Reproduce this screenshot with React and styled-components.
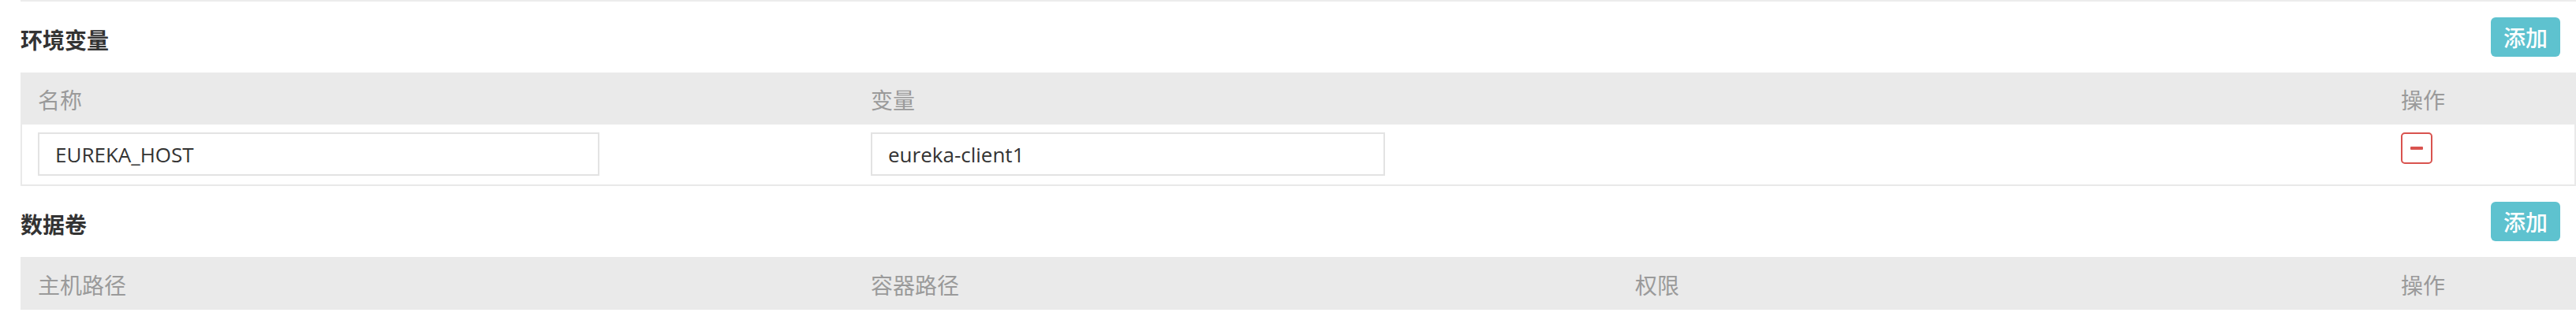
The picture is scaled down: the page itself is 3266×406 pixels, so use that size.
import React from "react";
import styled, { createGlobalStyle } from "styled-components";

const GlobalStyle = createGlobalStyle`
  html, body {
    margin: 0;
    padding: 0;
    background: #ffffff;
  }
  body {
    font-family: "Noto Sans CJK SC", "Open Sans", sans-serif;
  }
  * { box-sizing: border-box; }
`;

const Page = styled.div`
  padding-left: 26px;
  width: 3266px;
`;

const Divider = styled.div`
  height: 2px;
  background: #ececec;
`;

const Section = styled.section`
  display: flex;
  flex-direction: column;
`;

const SectionHead = styled.div`
  display: flex;
  justify-content: space-between;
  align-items: flex-start;
  padding: 20px 20px 20px 0;
`;

const Title = styled.h3`
  margin: 14px 0 0;
  font-family: "Noto Sans CJK SC", sans-serif;
  font-size: 28px;
  line-height: 28px;
  font-weight: 700;
  color: #333333;
`;

const AddButton = styled.button`
  width: 88px;
  height: 50px;
  border: none;
  border-radius: 6px;
  background: #5ec2cf;
  color: #ffffff;
  font-family: "Noto Sans CJK SC", sans-serif;
  font-size: 28px;
  font-weight: 500;
  line-height: 50px;
  padding: 0;
  cursor: pointer;
`;

const HeaderRow = styled.div`
  display: grid;
  grid-template-columns: ${(p) => p.$cols};
  height: ${(p) => p.$height || 66}px;
  background: #eaeaea;
  align-items: center;
`;

const HeaderCell = styled.div`
  padding-left: 22px;
  font-family: "Noto Sans CJK SC", sans-serif;
  font-size: 28px;
  line-height: 28px;
  color: #9a9a9a;
  margin-top: 2px;
`;

const BodyRow = styled.div`
  display: grid;
  grid-template-columns: ${(p) => p.$cols};
  border: 2px solid #e9e9e9;
  border-top: none;
`;

const BodyCell = styled.div`
  padding: 10px 22px 11px 20px;
  display: flex;
  align-items: flex-start;
`;

const TextInput = styled.input`
  width: ${(p) => p.$width}px;
  height: 55px;
  border: 2px solid #e3e3e3;
  border-radius: 0;
  padding: 0 20px;
  font-family: "Open Sans", sans-serif;
  font-size: 26px;
  color: #333333;
  outline: none;
  background: #ffffff;
`;

const RemoveButton = styled.button`
  width: 40px;
  height: 40px;
  padding: 0;
  border: 2px solid #d9534f;
  border-radius: 5px;
  background: #ffffff;
  display: flex;
  align-items: center;
  justify-content: center;
  cursor: pointer;
`;

const Dash = styled.span`
  display: block;
  width: 16px;
  height: 4px;
  background: #d9534f;
  border-radius: 1px;
`;

const ENV_COLS = "1056px 1940px 1fr";
const VOL_COLS = "1056px 969px 971px 1fr";

export default function App() {
  return (
    <>
      <GlobalStyle />
      <Page>
        <Divider />
        <Section>
          <SectionHead>
            <Title>环境变量</Title>
            <AddButton>添加</AddButton>
          </SectionHead>
          <HeaderRow $cols={ENV_COLS}>
            <HeaderCell>名称</HeaderCell>
            <HeaderCell>变量</HeaderCell>
            <HeaderCell>操作</HeaderCell>
          </HeaderRow>
          <BodyRow $cols={ENV_COLS}>
            <BodyCell>
              <TextInput $width={712} defaultValue="EUREKA_HOST" />
            </BodyCell>
            <BodyCell>
              <TextInput $width={652} defaultValue="eureka-client1" />
            </BodyCell>
            <BodyCell>
              <RemoveButton aria-label="删除">
                <Dash />
              </RemoveButton>
            </BodyCell>
          </BodyRow>
        </Section>
        <Section>
          <SectionHead>
            <Title>数据卷</Title>
            <AddButton>添加</AddButton>
          </SectionHead>
          <HeaderRow $cols={VOL_COLS} $height={67}>
            <HeaderCell>主机路径</HeaderCell>
            <HeaderCell>容器路径</HeaderCell>
            <HeaderCell>权限</HeaderCell>
            <HeaderCell>操作</HeaderCell>
          </HeaderRow>
        </Section>
      </Page>
    </>
  );
}
